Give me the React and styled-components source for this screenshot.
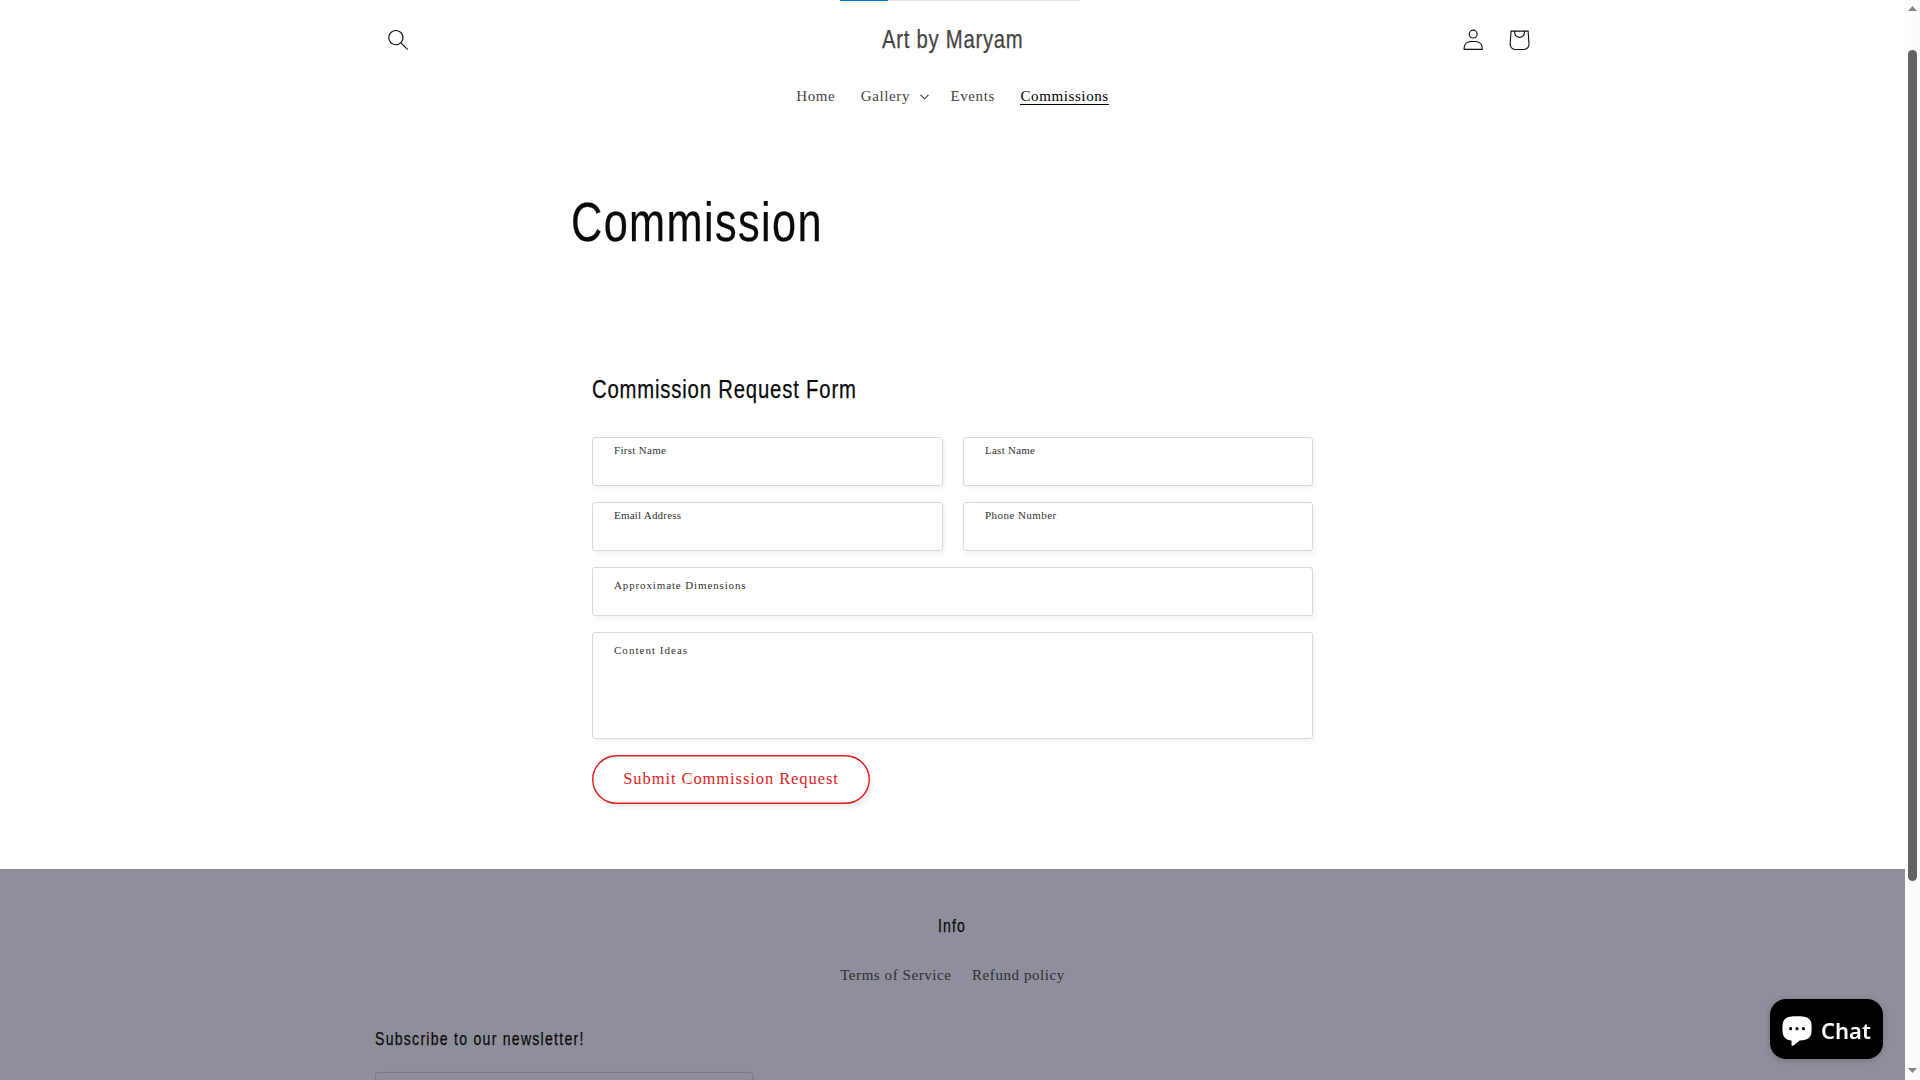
import React from "react";
import styled, { createGlobalStyle } from "styled-components";

const GlobalStyle = createGlobalStyle`
  *, *::before, *::after { box-sizing: border-box; }
  body { margin: 0; background: #fff; overflow: hidden; }
  h1, h2, p { margin: 0; font-weight: 400; }
  a { color: inherit; text-decoration: none; }
`;

const Window = styled.div`
  display: flex;
  width: 1920px;
  height: 1080px;
  overflow: hidden;
  font-family: "Liberation Serif", "Times New Roman", serif;
`;

const Page = styled.div`
  width: 1905px;
  height: 1080px;
  overflow: hidden;
  display: flex;
  flex-direction: column;
  align-items: stretch;
  > * { flex-shrink: 0; }
`;

const LoadTrack = styled.div`
  width: 241px;
  height: 1px;
  margin-left: 840px;
  background: #e5e5e5;
`;

const LoadBar = styled.div`
  width: 48px;
  height: 1px;
  background: #0078d7;
`;

const Header = styled.header`
  display: grid;
  grid-template-columns: 1fr auto 1fr;
  align-items: center;
  width: 1155px;
  height: 78px;
  margin: 0 auto;
`;

const HeaderSide = styled.div`
  display: flex;
  align-items: center;
  justify-content: ${(p) => (p.$end ? "flex-end" : "flex-start")};
  margin-right: ${(p) => (p.$end ? "-12px" : "0")};
`;

const SiteName = styled.div`
  display: flex;
  padding-bottom: 2px;
`;

const IconButton = styled.a`
  display: flex;
  align-items: center;
  justify-content: center;
  width: 46px;
  height: 46px;
  color: #121212;
  svg { display: block; flex: none; fill: currentColor; }
`;

const Condensed = styled.span`
  display: inline-block;
  font-family: "Liberation Sans", Arial, sans-serif;
  font-size: ${(p) => p.$size}px;
  line-height: ${(p) => p.$line}px;
  letter-spacing: ${(p) => p.$spacing}px;
  color: ${(p) => p.$color || "#0a0a0a"};
  -webkit-text-stroke: 0.25px currentColor;
  white-space: nowrap;
  transform: scaleX(0.78);
  transform-origin: ${(p) => p.$origin || "left"} center;
`;

const Nav = styled.nav`
  display: flex;
  justify-content: center;
  gap: 25.6px;
  margin-top: 7px;
  height: 20px;
`;

const NavLink = styled.a`
  display: flex;
  align-items: flex-start;
  gap: 10px;
  height: ${(p) => (p.$active ? "18px" : "20px")};
  margin-right: ${(p) => (p.$tight ? "-4.2px" : "0")};
  box-shadow: ${(p) => (p.$active ? "0 1px 0 #000" : "none")};
  font-size: 15px;
  line-height: 20px;
  letter-spacing: 0.6px;
  color: ${(p) => (p.$active ? "#000" : "#444")};
  svg { margin-top: 8px; }
`;

const Title = styled.h1`
  display: flex;
  height: 60px;
  margin: 86px 0 0 571px;
`;

const Form = styled.form`
  display: flex;
  flex-direction: column;
  width: 721px;
  margin: 122px 0 0 592px;
`;

const FormHeading = styled.h2`
  display: flex;
  height: 30px;
  margin-bottom: 33px;
`;

const FieldGrid = styled.div`
  display: grid;
  grid-template-columns: 351px 350px;
  column-gap: 20px;
  row-gap: 16px;
`;

const Field = styled.label`
  display: block;
  grid-column: ${(p) => (p.$wide ? "1 / -1" : "auto")};
  height: ${(p) => p.$height || 49}px;
  padding: ${(p) => (p.$wide ? 10 : 5)}px 21px;
  border: 1px solid #d9d9d9;
  border-radius: 3px;
  background: #fff;
  box-shadow: 2px 3px 5px rgba(0, 0, 0, 0.05);
  font-size: 11px;
  line-height: 14px;
  letter-spacing: ${(p) => p.$spacing}px;
  color: #333;
`;

const Submit = styled.button`
  align-self: flex-start;
  width: 278px;
  height: 49.5px;
  margin-top: 15.5px;
  padding: 0;
  border: 0;
  border-radius: 25px;
  background: #fff;
  box-shadow: inset 0 0 0 1.4px #dd1d1d, 2px 3px 5px rgba(0, 0, 0, 0.08);
  font-family: inherit;
  font-size: 16.5px;
  letter-spacing: 0.92px;
  line-height: 20px;
  color: #dd1d1d;
`;

const Footer = styled.footer`
  flex: 1;
  margin-top: 65px;
  padding-top: 46px;
  background: #8f8f9b;
  display: flex;
  flex-direction: column;
`;

const FooterHeading = styled.h2`
  display: flex;
  justify-content: center;
  height: 22px;
`;

const FooterLinks = styled.div`
  display: flex;
  justify-content: center;
  gap: 20.5px;
  height: 20px;
  margin-top: 28px;
  font-size: 15px;
  line-height: 20px;
  letter-spacing: 0.57px;
  color: #2e2e33;
`;

const Newsletter = styled.div`
  width: 378px;
  margin: 43px 0 0 375px;
`;

const NewsletterInput = styled.div`
  height: 49px;
  margin-top: 22px;
  border: 1px solid #7b7b86;
  border-radius: 3px;
  box-shadow: 2px 3px 5px rgba(0, 0, 0, 0.05);
`;

const NewsletterHeading = styled.h2`
  display: flex;
  height: 22px;
`;

const Scrollbar = styled.div`
  display: flex;
  flex-direction: column;
  align-items: center;
  width: 15px;
  height: 1080px;
  padding: 6px 0 7px;
  background: #fcfcfc;
`;

const Thumb = styled.div`
  width: 9px;
  height: 831px;
  margin: 39px 0 187px;
  border-radius: 5px;
  background: #636363;
`;

const Arrow = styled.svg`
  display: block;
  flex: none;
  fill: #858585;
`;

const ChatButton = styled.button`
  position: fixed;
  left: 1770px;
  top: 999px;
  display: flex;
  align-items: center;
  gap: 9px;
  width: 113px;
  height: 60px;
  padding: 2px 0 0 12px;
  border: 0;
  border-radius: 16px;
  background: #000;
  color: #fff;
  box-shadow: 0 1px 6px rgba(0, 0, 0, 0.2);
  font-family: "Noto Sans", sans-serif;
  font-size: 22px;
  font-weight: 600;
  line-height: 30px;
  svg { display: block; flex: none; margin-top: 2px; }
`;

const SearchIcon = () => (
  <svg width="20.4" height="21.5" viewBox="0 0 18 19">
    <path fillRule="evenodd" d="M11.03 11.68A5.784 5.784 0 112.85 3.5a5.784 5.784 0 018.18 8.18zm.26 1.12a6.78 6.78 0 11.72-.7l5.4 5.4a.5.5 0 11-.71.7l-5.41-5.4z" />
  </svg>
);

const AccountIcon = () => (
  <svg width="20.4" height="21.5" viewBox="0 0 18 19">
    <path fillRule="evenodd" d="M6 4.5a3 3 0 116 0 3 3 0 01-6 0zm3-4a4 4 0 100 8 4 4 0 000-8zm5.58 12.15c1.12.82 1.83 2.24 1.91 4.85H1.51c.08-2.6.79-4.03 1.9-4.85C4.66 11.75 6.5 11.5 9 11.5s4.35.26 5.58 1.15zM9 10.5c-2.5 0-4.65.24-6.17 1.35C1.27 12.98.5 14.93.5 18v.5h17V18c0-3.07-.77-5.02-2.33-6.15-1.52-1.1-3.67-1.35-6.17-1.35z" />
  </svg>
);

const CartIcon = () => (
  <svg width="46" height="46" viewBox="0 0 40 40">
    <path fillRule="evenodd" d="M15.75 11.8h-3.16l-.77 11.6a5 5 0 0 0 4.99 5.34h7.38a5 5 0 0 0 4.99-5.33L28.4 11.8zm0 1h-2.22l-.71 10.67a4 4 0 0 0 3.99 4.27h7.38a4 4 0 0 0 4-4.27l-.72-10.67h-2.22v.63a4.75 4.75 0 1 1-9.5 0zm8.5 0h-7.5v.63a3.75 3.75 0 1 0 7.5 0z" />
  </svg>
);

const Chevron = () => (
  <svg width="9" height="6" viewBox="0 0 9 6" fill="none" stroke="#333" strokeWidth="1.1">
    <path d="M.5 .8 4.5 4.8 8.5 .8" />
  </svg>
);

const ChatIcon = () => (
  <svg width="30" height="30" viewBox="0 0 30 30">
    <path fill="#fff" d="M8 .8C12 .2 18 .2 22 .8c4.300.6 7 3 7.400 7 .3 3 .3 6 0 9-.5 4-3 6.500-7 7.200-1.500.2-3 .3-4.600.400l-6.300 5c-1 .8-2 .3-2-1v-4C4 24.200 1.200 21 .7 17c-.4-3-.4-6 0-9C1.200 4 4 1.400 8 .8z" />
    <circle cx="8.600" cy="12.700" r="1.600" />
    <circle cx="15" cy="12.700" r="1.600" />
    <circle cx="21.400" cy="12.700" r="1.600" />
  </svg>
);

const fields = [
  { label: "First Name", spacing: 0.3 },
  { label: "Last Name", spacing: 0.25 },
  { label: "Email Address", spacing: 0.22 },
  { label: "Phone Number", spacing: 0.45 },
  { label: "Approximate Dimensions", spacing: 0.87, wide: true },
  { label: "Content Ideas", spacing: 1.03, wide: true, height: 107 },
];

export default function App() {
  return (
    <>
      <GlobalStyle />
      <Window>
        <Page>
          <LoadTrack>
            <LoadBar />
          </LoadTrack>
          <Header>
            <HeaderSide>
              <IconButton><SearchIcon /></IconButton>
            </HeaderSide>
            <SiteName>
              <Condensed $size={26} $line={30} $spacing={0.95} $color="#444" $origin="center">
                Art by Maryam
              </Condensed>
            </SiteName>
            <HeaderSide $end>
              <IconButton><AccountIcon /></IconButton>
              <IconButton><CartIcon /></IconButton>
            </HeaderSide>
          </Header>
          <Nav>
            <NavLink>Home</NavLink>
            <NavLink $tight>Gallery<Chevron /></NavLink>
            <NavLink>Events</NavLink>
            <NavLink $active>Commissions</NavLink>
          </Nav>
          <Title>
            <Condensed $size={55.5} $line={60} $spacing={1.76}>Commission</Condensed>
          </Title>
          <Form>
            <FormHeading>
              <Condensed $size={26} $line={30} $spacing={1.06}>Commission Request Form</Condensed>
            </FormHeading>
            <FieldGrid>
              {fields.map((f) => (
                <Field key={f.label} $wide={f.wide} $height={f.height} $spacing={f.spacing}>
                  {f.label}
                </Field>
              ))}
            </FieldGrid>
            <Submit type="button">Submit Commission Request</Submit>
          </Form>
          <Footer>
            <FooterHeading>
              <Condensed $size={18} $line={22} $spacing={1.5} $origin="center">Info</Condensed>
            </FooterHeading>
            <FooterLinks>
              <a>Terms of Service</a>
              <a>Refund policy</a>
            </FooterLinks>
            <Newsletter>
              <NewsletterHeading>
                <Condensed $size={18} $line={22} $spacing={1.63}>Subscribe to our newsletter!</Condensed>
              </NewsletterHeading>
              <NewsletterInput />
            </Newsletter>
          </Footer>
        </Page>
        <Scrollbar>
          <Arrow width="9" height="5" viewBox="0 0 9 5"><path d="M4.500 0 9 5H0z" /></Arrow>
          <Thumb />
          <Arrow width="9" height="5" viewBox="0 0 9 5"><path d="M0 0h9L4.500 5z" /></Arrow>
        </Scrollbar>
        <ChatButton type="button">
          <ChatIcon />
          Chat
        </ChatButton>
      </Window>
    </>
  );
}
